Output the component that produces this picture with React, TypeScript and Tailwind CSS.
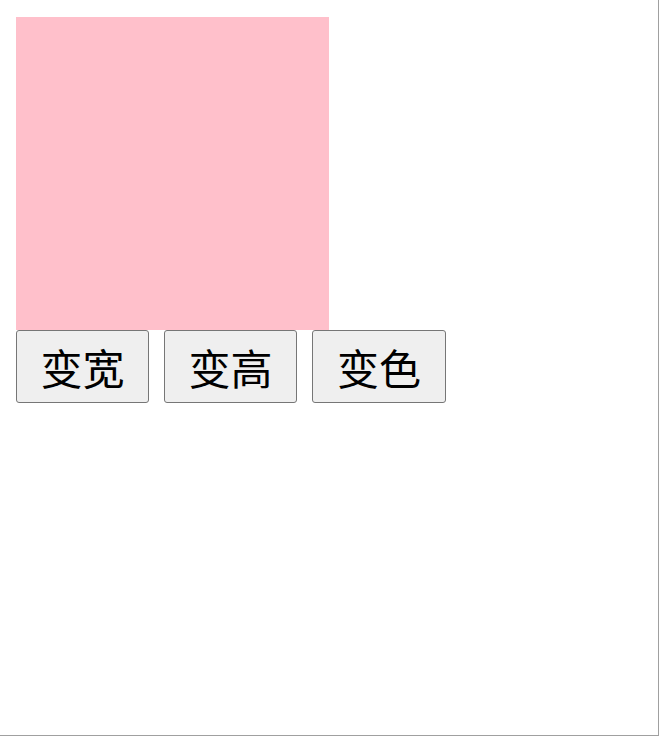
export default function App() {
  const btn =
    "h-[73px] flex items-center justify-center bg-[#efefef] border border-[#767676] rounded-[3px] text-[42px] text-black leading-none";
  return (
    <div
      className="w-[659px] h-[736px] border-r border-b border-[#a0a0a0] pt-[17px] pl-4 bg-white"
      style={{ fontFamily: '"Noto Sans CJK SC", "Noto Sans", sans-serif' }}
    >
      <div className="w-[313px] h-[313px] bg-[#ffc0cb]" />
      <div className="flex gap-[15px]">
        <button className={btn + " w-[133px]"}>变宽</button>
        <button className={btn + " w-[133px]"}>变高</button>
        <button className={btn + " w-[134px]"}>变色</button>
      </div>
    </div>
  );
}
